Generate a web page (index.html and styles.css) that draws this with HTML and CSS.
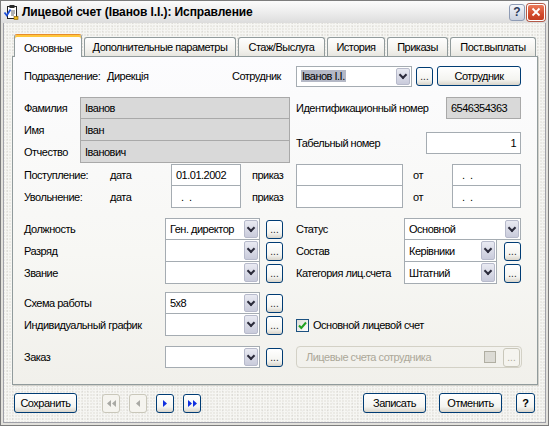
FILE: index.html
```html
<!DOCTYPE html>
<html lang="ru">
<head>
    <meta charset="UTF-8">
    <title>Лицевой счет</title>
    <link rel="stylesheet" href="styles.css">
</head>
<body>

<div class="window">

    <div class="titlebar">
        <svg class="app-icon" viewBox="0 0 16 16" width="16" height="16">
            <rect x="4.5" y="2.5" width="9" height="12" fill="#fff" stroke="#222"/>
            <rect x="6.5" y="1" width="5" height="3" fill="#2a2a2a"/>
            <path d="M8 7h4M8 9h4M8 11h3" stroke="#666"/>
            <path d="M1.5 8.5l2.3 3 3.7-6" fill="none" stroke="#1d4fd8" stroke-width="1.8"/>
            <rect x="11" y="12.5" width="4" height="3" fill="#e9b91c" stroke="#8a5a00" stroke-width=".6"/>
        </svg>
        <span class="title">Лицевой счет (Іванов І.І.): Исправление</span>
        <span class="cap-btn cap-help">?</span>
        <span class="cap-btn cap-close">
            <svg viewBox="0 0 10 10" width="10" height="10"><path d="M1.5 1.5l7 7M8.5 1.5l-7 7" stroke="#fff" stroke-width="1.8"/></svg>
        </span>
    </div>

    <div class="frame">
        <div class="client">

            <div class="tabs">
                <div class="tab active tab-main">Основные</div>
                <div class="tab tab-extra">Дополнительные параметры</div>
                <div class="tab tab-stage">Стаж/Выслуга</div>
                <div class="tab tab-hist">История</div>
                <div class="tab tab-orders">Приказы</div>
                <div class="tab tab-pay">Пост.выплаты</div>
            </div>

            <div class="panel">

                <!-- подразделение / сотрудник -->
                <div class="row">
                    <span class="lbl w83">Подразделение:</span>
                    <span class="lbl w125">Дирекція</span>
                    <span class="lbl w64">Сотрудник</span>
                    <div class="field combo w116 h21">
                        <span class="val"><span class="sel">Іванов І.І.</span></span>
                        <span class="arrow"></span>
                    </div>
                    <span class="dots ml4">...</span>
                    <span class="btn btn-emp">Сотрудник</span>
                </div>

                <!-- ФИО -->
                <div class="split mt10">
                    <div class="stack w266">
                        <div class="row">
                            <span class="lbl w56">Фамилия</span>
                            <span class="field ro w210">Іванов</span>
                        </div>
                        <div class="row">
                            <span class="lbl w56">Имя</span>
                            <span class="field ro w210">Іван</span>
                        </div>
                        <div class="row">
                            <span class="lbl w56">Отчество</span>
                            <span class="field ro w210">Іванович</span>
                        </div>
                    </div>
                    <div class="side">
                        <div class="row">
                            <span class="lbl w150">Идентификационный номер</span>
                            <span class="field ro w75">6546354363</span>
                        </div>
                        <div class="row mt13">
                            <span class="lbl w130">Табельный номер</span>
                            <span class="field num w95">1</span>
                        </div>
                    </div>
                </div>

                <!-- даты -->
                <div class="stack mt1">
                    <div class="row">
                        <span class="lbl w86">Поступление:</span>
                        <span class="lbl w61">дата</span>
                        <span class="field w70">01.01.2002</span>
                        <span class="lbl w55 pl11">приказ</span>
                        <span class="field w107"></span>
                        <span class="lbl w49 pl10">от</span>
                        <span class="field mask w69">. .</span>
                    </div>
                    <div class="row">
                        <span class="lbl w86">Увольнение:</span>
                        <span class="lbl w61">дата</span>
                        <span class="field mask w70">. .</span>
                        <span class="lbl w55 pl11">приказ</span>
                        <span class="field w107"></span>
                        <span class="lbl w49 pl10">от</span>
                        <span class="field mask w69">. .</span>
                    </div>
                </div>

                <!-- должность / статус -->
                <div class="stack mt10">
                    <div class="row">
                        <span class="lbl w141">Должность</span>
                        <div class="field combo w95"><span class="val">Ген. директор</span><span class="arrow"></span></div>
                        <span class="dots ml6">...</span>
                        <span class="lbl w108 ml13">Статус</span>
                        <div class="field combo w117"><span class="val">Основной</span><span class="arrow"></span></div>
                    </div>
                    <div class="row">
                        <span class="lbl w141">Разряд</span>
                        <div class="field combo w95"><span class="val"></span><span class="arrow"></span></div>
                        <span class="dots ml6">...</span>
                        <span class="lbl w108 ml13">Состав</span>
                        <div class="field combo w93"><span class="val">Керівники</span><span class="arrow"></span></div>
                        <span class="dots ml7">...</span>
                    </div>
                    <div class="row">
                        <span class="lbl w141">Звание</span>
                        <div class="field combo w95"><span class="val"></span><span class="arrow"></span></div>
                        <span class="dots ml6">...</span>
                        <span class="lbl w108 ml13">Категория лиц.счета</span>
                        <div class="field combo w93"><span class="val">Штатний</span><span class="arrow"></span></div>
                        <span class="dots ml7">...</span>
                    </div>
                </div>

                <!-- график -->
                <div class="stack mt8">
                    <div class="row">
                        <span class="lbl w141">Схема работы</span>
                        <div class="field combo w95"><span class="val">5x8</span><span class="arrow"></span></div>
                        <span class="dots ml6">...</span>
                    </div>
                    <div class="row">
                        <span class="lbl w141">Индивидуальный график</span>
                        <div class="field combo w95"><span class="val"></span><span class="arrow"></span></div>
                        <span class="dots ml6">...</span>
                        <label class="check-line ml13">
                            <span class="check">
                                <svg viewBox="0 0 9 9" width="9" height="9"><path d="M1 4.5l2.3 2.5L8 1.5" fill="none" stroke="#21a121" stroke-width="2"/></svg>
                            </span>
                            Основной лицевой счет
                        </label>
                    </div>
                </div>

                <!-- заказ -->
                <div class="row mt10">
                    <span class="lbl w141">Заказ</span>
                    <div class="field combo w95"><span class="val"></span><span class="arrow"></span></div>
                    <span class="dots ml6">...</span>
                    <div class="group-off ml13">
                        <span class="group-text">Лицевые счета сотрудника</span>
                        <span class="check off"></span>
                        <span class="dots off">...</span>
                    </div>
                </div>

            </div>

            <div class="footer">
                <span class="btn w63">Сохранить</span>
                <div class="nav">
                    <span class="nav-btn off">
                        <svg viewBox="0 0 9 7" width="9" height="7"><path d="M4 0v7L0 3.5zM9 0v7L5 3.5z" fill="#a9a9a4"/></svg>
                    </span>
                    <span class="nav-btn off">
                        <svg viewBox="0 0 4 7" width="4" height="7"><path d="M4 0v7L0 3.5z" fill="#a9a9a4"/></svg>
                    </span>
                    <span class="nav-btn">
                        <svg viewBox="0 0 4 7" width="4" height="7"><path d="M0 0v7l4-3.5z" fill="#1030e0"/></svg>
                    </span>
                    <span class="nav-btn">
                        <svg viewBox="0 0 9 7" width="9" height="7"><path d="M0 0v7l4-3.5zM5 0v7l4-3.5z" fill="#1030e0"/></svg>
                    </span>
                </div>
                <div class="actions">
                    <span class="btn w63">Записать</span>
                    <span class="btn w63 ml13">Отменить</span>
                    <span class="btn btn-q ml14">?</span>
                </div>
            </div>

        </div>
    </div>

</div>

</body>
</html>
```

FILE: styles.css
```css
* {
    box-sizing: border-box;
}

body {
    margin: 0;
    font: 11px "Liberation Sans", Arial, sans-serif;
    letter-spacing: -0.5px;
    color: #000;
    background: #fff;
}

/* окно */
.window {
    width: 549px;
    height: 426px;
    border: 1px solid #7c7c7c;
    background: #e2e1dc;
    display: flex;
    flex-direction: column;
}

.titlebar {
    flex: none;
    height: 22px;
    display: flex;
    align-items: center;
    padding: 0 3px 0 2px;
    background: linear-gradient(#fbfbfb, #ececec 55%, #dcdcdc);
}

.app-icon {
    flex: none;
}

.title {
    flex: 1;
    margin-left: 3px;
    font-size: 12px;
    font-weight: bold;
    letter-spacing: -0.1px;
    white-space: nowrap;
}

.cap-btn {
    width: 17px;
    height: 17px;
    border-radius: 3px;
    display: flex;
    align-items: center;
    justify-content: center;
    margin-left: 2px;
    letter-spacing: 0;
}

.cap-help {
    width: 16px;
    border: 1px solid #8e9bb4;
    background: linear-gradient(#f4f6fb, #c9d0de);
    color: #2c3a5a;
    font-weight: bold;
    font-size: 12px;
}

.cap-close {
    width: 18px;
    border: 1px solid #fff;
    background: linear-gradient(#ec7a5a, #d24a2c 60%, #c43c20);
    box-shadow: 0 0 0 1px #b35a48;
}

.frame {
    flex: 1;
    display: flex;
    padding: 0 2px 2px;
}

.client {
    flex: 1;
    border: 1px solid #9fa0a8;
    border-top: none;
    padding: 11px 7px 0 8px;
    background-color: #ebeae5;
    background-image:
        radial-gradient(rgba(255, 255, 255, .55) 1px, transparent 1.2px),
        radial-gradient(rgba(0, 0, 0, .06) 1px, transparent 1.2px);
    background-size: 3px 3px, 5px 4px;
    background-position: 0 0, 1px 2px;
}

/* вкладки */
.tabs {
    display: flex;
    align-items: flex-end;
    gap: 2px;
    height: 22px;
    padding-left: 2px;
    position: relative;
    z-index: 1;
}

.tab {
    height: 19px;
    line-height: 18px;
    text-align: center;
    white-space: nowrap;
    border: 1px solid #919b9c;
    border-bottom: none;
    border-radius: 3px 3px 0 0;
    background: linear-gradient(#fefefe, #f4f3ef 60%, #e7e6e0);
}

.tab.active {
    height: 23px;
    line-height: 22px;
    padding-top: 2px;
    margin-bottom: -1px;
    border-top: 1px solid #e68b2c;
    background: #fcfcfe;
    box-shadow: inset 0 2px 0 #ffc73c;
}

.tab-main { width: 68px; }
.tab-extra { width: 152px; }
.tab-stage { width: 87px; }
.tab-hist { width: 58px; }
.tab-orders { width: 61px; }
.tab-pay { width: 86px; }

.panel {
    height: 329px;
    border: 1px solid #919b9c;
    padding: 8px 0 0 11px;
    background: linear-gradient(#fcfcfe, #f7f7f4 60%, #f1f0eb);
    box-shadow: 1px 1px 0 #d2d1cb;
}

/* строки формы */
.row {
    display: flex;
    align-items: center;
    height: 22px;
}

.split {
    display: flex;
}

.side {
    margin-left: 6px;
}

.lbl {
    flex: none;
    white-space: nowrap;
}

.field {
    flex: none;
    height: 22px;
    display: flex;
    align-items: center;
    padding: 0 4px;
    border: 1px solid #a5acb2;
    background: #fff;
    white-space: nowrap;
    overflow: hidden;
}

/* соседние поля делят одну линию */
.stack .row + .row .field {
    border-top: none;
}

.field.ro {
    background: #d9d9d9;
    border-color: #a9a9a9;
}

.field.num {
    justify-content: flex-end;
}

.field.mask {
    padding-left: 9px;
    word-spacing: 3px;
}

.combo {
    padding: 1px;
}

.combo .val {
    flex: 1;
    padding-left: 3px;
    overflow: hidden;
}

.sel {
    background: #b4b8c6;
    padding: 1px 1px;
}

.arrow {
    flex: none;
    width: 14px;
    height: 100%;
    display: flex;
    align-items: center;
    justify-content: center;
    border: 1px solid #b7bacb;
    border-radius: 2px;
    background: linear-gradient(#e9eaf2, #c9cbdb);
}

.arrow::after {
    content: "";
    width: 4px;
    height: 4px;
    margin-top: -3px;
    border-right: 2px solid #2b2b3b;
    border-bottom: 2px solid #2b2b3b;
    transform: rotate(45deg);
}

.h21 {
    height: 21px;
}

/* кнопки */
.btn,
.dots,
.nav-btn {
    flex: none;
    display: flex;
    align-items: center;
    justify-content: center;
    border: 1px solid #003c74;
    border-radius: 3px;
    background: linear-gradient(#ffffff, #f4f4f0 70%, #d8d4ca);
    white-space: nowrap;
}

.btn {
    height: 20px;
}

.btn-emp {
    width: 84px;
    margin-left: 4px;
}

.btn-q {
    width: 19px;
    font-weight: bold;
    letter-spacing: 0;
}

.dots {
    width: 17px;
    height: 19px;
    font-size: 10px;
    line-height: 10px;
    letter-spacing: 0;
    align-items: flex-end;
    padding-bottom: 3px;
    color: #222;
}

.dots.off,
.nav-btn.off {
    border-color: #c9c7ba;
    background: #f5f4ef;
    color: #aca899;
}

.check-line {
    display: flex;
    align-items: center;
    gap: 4px;
}

.check {
    width: 13px;
    height: 13px;
    display: flex;
    align-items: center;
    justify-content: center;
    border: 1px solid #1c5180;
    background: linear-gradient(135deg, #dcdcd7, #fff);
}

.check.off {
    width: 12px;
    height: 12px;
    border-color: #b0aea2;
    background: #dcdbd5;
}

.group-off {
    width: 226px;
    height: 22px;
    display: flex;
    align-items: center;
    padding: 0 1px 0 9px;
    border: 1px solid #d3d1c6;
    border-radius: 4px;
    color: #aca899;
}

.group-text {
    flex: 1;
}

.group-off .dots {
    margin-left: 7px;
}

/* низ окна */
.footer {
    display: flex;
    align-items: center;
    margin-top: 8px;
    padding: 0 3px 0 2px;
}

.nav {
    display: flex;
    gap: 9px;
    margin-left: 25px;
}

.nav-btn {
    width: 18px;
    height: 19px;
}

.actions {
    display: flex;
    margin-left: auto;
}

/* размеры */
.w49 { width: 49px; }
.w55 { width: 55px; }
.w56 { width: 56px; }
.w61 { width: 61px; }
.w63 { width: 63px; }
.w64 { width: 64px; }
.w69 { width: 69px; }
.w70 { width: 70px; }
.w75 { width: 75px; }
.w83 { width: 83px; }
.w86 { width: 86px; }
.w93 { width: 93px; }
.w95 { width: 95px; }
.w107 { width: 107px; }
.w108 { width: 108px; }
.w116 { width: 116px; }
.w117 { width: 117px; }
.w125 { width: 125px; }
.w130 { width: 130px; }
.w141 { width: 141px; }
.w150 { width: 150px; }
.w210 { width: 210px; }
.w266 { width: 266px; }

.pl10 { padding-left: 10px; }
.pl11 { padding-left: 11px; }

.ml4 { margin-left: 4px; }
.ml6 { margin-left: 6px; }
.ml7 { margin-left: 7px; }
.ml13 { margin-left: 13px; }
.ml14 { margin-left: 14px; }

.mt1 { margin-top: 1px; }
.mt8 { margin-top: 8px; }
.mt10 { margin-top: 10px; }
.mt13 { margin-top: 13px; }
```
